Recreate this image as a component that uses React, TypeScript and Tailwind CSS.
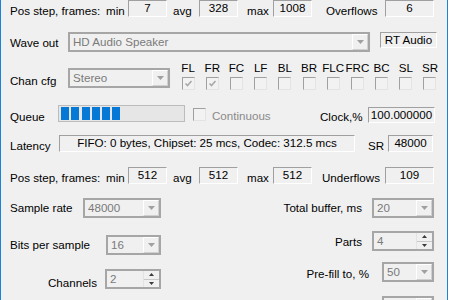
import React from 'react';

const CHANNELS = [
  { name: 'FL', on: true },
  { name: 'FR', on: true },
  { name: 'FC', on: false },
  { name: 'LF', on: false },
  { name: 'BL', on: false },
  { name: 'BR', on: false },
  { name: 'FLC', on: false },
  { name: 'FRC', on: false },
  { name: 'BC', on: false },
  { name: 'SL', on: false },
  { name: 'SR', on: false },
];

function ValueBox({ children, className = '' }: { children: React.ReactNode; className?: string }) {
  return (
    <div
      className={`h-[17px] shrink-0 border border-t-[#a0a0a0] border-l-[#a0a0a0] border-r-white border-b-white text-center leading-[13px] whitespace-nowrap ${className}`}
    >
      {children}
    </div>
  );
}

function Combo({ value, className = '' }: { value: string; className?: string }) {
  return (
    <div className={`flex h-[20px] shrink-0 border-2 border-[#a6a6a6] bg-[#f0f0f0] ${className}`}>
      <div className="flex-1 overflow-hidden whitespace-nowrap pl-[3px] leading-[16px] text-[#7a7a7a]">{value}</div>
      <div className="flex w-[16px] items-center justify-center border border-t-white border-l-white border-r-[#d0d0d0] border-b-[#d0d0d0]">
        <svg width="7" height="4" viewBox="0 0 7 4">
          <path d="M0 0h7L3.5 4z" fill="#a0a0a0" />
        </svg>
      </div>
    </div>
  );
}

function Spin({ value, className = '' }: { value: string; className?: string }) {
  return (
    <div className={`flex h-[20px] shrink-0 border-2 border-[#a6a6a6] bg-[#f0f0f0] ${className}`}>
      <div className="flex-1 overflow-hidden whitespace-nowrap pl-[3px] leading-[16px] text-[#7a7a7a]">{value}</div>
      <div className="flex w-[16px] flex-col border-l border-[#e3e3e3]">
        <div className="flex flex-1 items-center justify-center border-b border-[#c8c8c8]">
          <svg width="5" height="3" viewBox="0 0 5 3">
            <path d="M0 3h5L2.5 0z" fill="#3a3a3a" />
          </svg>
        </div>
        <div className="flex flex-1 items-center justify-center">
          <svg width="5" height="3" viewBox="0 0 5 3">
            <path d="M0 0h5L2.5 3z" fill="#3a3a3a" />
          </svg>
        </div>
      </div>
    </div>
  );
}

function Check({ checked = false }: { checked?: boolean }) {
  return (
    <div className="flex h-[13px] w-[13px] shrink-0 items-center justify-center border border-t-[#a0a0a0] border-l-[#a0a0a0] border-r-[#e3e3e3] border-b-[#e3e3e3] bg-[#f2f2f2]">
      {checked && (
        <svg width="9" height="9" viewBox="0 0 9 9">
          <path d="M1.5 4.5l2 2L7.5 2" stroke="#a8a8a8" strokeWidth="1.6" fill="none" />
        </svg>
      )}
    </div>
  );
}

function PosRow({
  values,
  tail,
  tailLabel,
  tailPad,
}: {
  values: string[];
  tail: string;
  tailLabel: string;
  tailPad: string;
}) {
  return (
    <div className="flex h-[17px] items-start">
      <span className="ml-[9px] mt-[4px] w-[96px] shrink-0 whitespace-nowrap">Pos step, frames:</span>
      <span className="mt-[4px] w-[22px] shrink-0">min</span>
      <ValueBox className="w-[39px]">{values[0]}</ValueBox>
      <span className="mt-[4px] w-[32px] shrink-0 pl-[6px]">avg</span>
      <ValueBox className="w-[39px]">{values[1]}</ValueBox>
      <span className="mt-[4px] w-[35px] shrink-0 pl-[9px]">max</span>
      <ValueBox className="w-[39px]">{values[2]}</ValueBox>
      <span className={`mt-[4px] w-[73px] shrink-0 ${tailPad}`}>{tailLabel}</span>
      <ValueBox className="w-[49px]">{tail}</ValueBox>
    </div>
  );
}

export default function App() {
  return (
    <div className="h-[300px] w-[450px] overflow-hidden bg-white">
      <div className="h-[300px] w-[448px] border-x border-[#1883d7] bg-[#f0f0f0] font-['Liberation_Sans',Arial,sans-serif] text-[11.6px] leading-[14px] text-black">
        <PosRow values={['7', '328', '1008']} tailLabel="Overflows" tail="6" tailPad="pl-[14px]" />

        <div className="mt-[15px] flex h-[20px] items-start">
          <span className="ml-[9px] mt-[4px] w-[58px] shrink-0 whitespace-nowrap">Wave out</span>
          <Combo value="HD Audio Speaker" className="w-[302px]" />
          <div className="ml-[10px] h-[16px] w-[57px] shrink-0 border border-t-[#a0a0a0] border-l-[#a0a0a0] border-r-white border-b-white text-center leading-[14px]">
            RT Audio
          </div>
        </div>

        <div className="mt-[9px] flex h-[29px] items-start">
          <span className="ml-[9px] mt-[13px] w-[58px] shrink-0 whitespace-nowrap">Chan cfg</span>
          <div className="mt-[7px]">
            <Combo value="Stereo" className="w-[102px]" />
          </div>
          <div className="ml-[6px] flex">
            {CHANNELS.map((c) => (
              <div key={c.name} className="flex w-[24.2px] shrink-0 flex-col items-center">
                <span className="whitespace-nowrap">{c.name}</span>
                <div className="mt-[2px]">
                  <Check checked={c.on} />
                </div>
              </div>
            ))}
          </div>
        </div>

        <div className="mt-[15px] flex h-[17px] items-start">
          <span className="ml-[9px] mt-[5px] w-[48px] shrink-0">Queue</span>
          <div className="flex h-[17px] w-[127px] shrink-0 gap-[2.3px] border border-[#bcbcbc] bg-[#e6e6e6] py-[1px] pl-[2px]">
            {[0, 1, 2, 3, 4, 5].map((i) => (
              <div key={i} className="h-full w-[8px] bg-[#0678d6]" />
            ))}
          </div>
          <div className="ml-[8px] mt-[3px]">
            <Check />
          </div>
          <span className="ml-[6px] mt-[4px] w-[102px] shrink-0 text-[#8a8a8a]">Continuous</span>
          <span className="mt-[5px] w-[54px] shrink-0 pl-[6px] whitespace-nowrap">Clock,%</span>
          <div className="mt-[2px] h-[16px] w-[67px] shrink-0 border border-t-[#a0a0a0] border-l-[#a0a0a0] border-r-white border-b-white text-center leading-[13px]">
            100.000000
          </div>
        </div>

        <div className="mt-[13px] flex h-[17px] items-start">
          <span className="ml-[9px] mt-[4px] w-[49px] shrink-0">Latency</span>
          <ValueBox className="w-[296px]">FIFO: 0 bytes, Chipset: 25 mcs, Codec: 312.5 mcs</ValueBox>
          <span className="mt-[4px] w-[33px] shrink-0 pl-[13px]">SR</span>
          <ValueBox className="h-[16px] w-[45px]">48000</ValueBox>
        </div>

        <div className="mt-[15px]">
          <PosRow values={['512', '512', '512']} tailLabel="Underflows" tail="109" tailPad="pl-[10px]" />
        </div>

        <div className="flex">
          <div className="w-[160px] shrink-0">
            <div className="mt-[14px] flex h-[20px] items-start">
              <span className="ml-[9px] mt-[3px] w-[73px] shrink-0 whitespace-nowrap">Sample rate</span>
              <Combo value="48000" className="w-[78px]" />
            </div>
            <div className="mt-[17px] flex h-[20px] items-start">
              <span className="ml-[9px] mt-[3px] w-[96px] shrink-0 whitespace-nowrap">Bits per sample</span>
              <Combo value="16" className="w-[55px]" />
            </div>
            <div className="mt-[14px] flex h-[20px] items-start">
              <span className="ml-[47px] mt-[7px] w-[57px] shrink-0">Channels</span>
              <Spin value="2" className="w-[56px]" />
            </div>
          </div>
          <div className="w-[286px] shrink-0 pr-[13px]">
            <div className="mt-[14px] flex h-[20px] items-start justify-end">
              <span className="mt-[3px] whitespace-nowrap">Total buffer, ms</span>
              <Combo value="20" className="ml-[10px] w-[62px]" />
            </div>
            <div className="mt-[13px] flex h-[20px] items-start justify-end">
              <span className="mt-[4px]">Parts</span>
              <Spin value="4" className="ml-[10px] w-[62px]" />
            </div>
            <div className="mt-[11px] flex h-[20px] items-start justify-end">
              <span className="mt-[5px] whitespace-nowrap">Pre-fill to, %</span>
              <Combo value="50" className="ml-[13px] w-[52px]" />
            </div>
            <div className="mt-[14px] flex h-[20px] items-start justify-end">
              <Combo value="" className="w-[52px]" />
            </div>
          </div>
        </div>
      </div>
    </div>
  );
}
